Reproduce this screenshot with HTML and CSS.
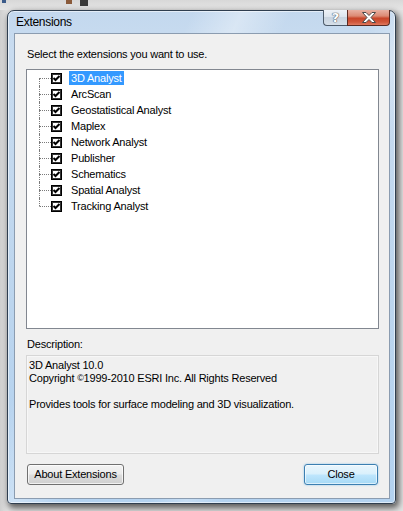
FILE: index.html
```html
<!DOCTYPE html>
<html>
<head>
<meta charset="utf-8">
<link rel="stylesheet" href="styles.css">
</head>
<body>
<div class="desk">
  <div class="strip">
    <span class="bit bit-a"></span>
    <span class="bit bit-b"></span>
    <span class="bit bit-c"></span>
  </div>
  <div class="window">
    <div class="titlebar">
      <div class="title">Extensions</div>
      <div class="caps">
        <div class="cap cap-help">?</div>
        <div class="cap cap-close">
          <svg width="16" height="11" viewBox="0 0 16 11"><path d="M1.5 0.5 H5 L8 3.5 L11 0.5 H14.5 L10 5.5 L14.5 10.5 H11 L8 7.5 L5 10.5 H1.5 L6 5.5 Z" fill="#ffffff" stroke="#4a4a4a" stroke-width="1"/></svg>
        </div>
      </div>
    </div>
    <div class="client">
      <div class="label first">Select the extensions you want to use.</div>
      <div class="listbox">
        <div class="tree">
          <div class="row top"><div class="conn"><div class="up"></div><div class="dn"></div></div><svg class="chk" width="11" height="11" viewBox="0 0 11 11"><rect x="0.5" y="0.5" width="10" height="10" fill="#fff" stroke="#000"/><rect x="1.5" y="1.5" width="8" height="8" fill="none" stroke="#333"/><path d="M2.5 5 L4.5 7 L8.5 3" fill="none" stroke="#000" stroke-width="2"/></svg><span class="name sel">3D Analyst</span></div>
          <div class="row"><div class="conn"><div class="up"></div><div class="dn"></div></div><svg class="chk" width="11" height="11" viewBox="0 0 11 11"><rect x="0.5" y="0.5" width="10" height="10" fill="#fff" stroke="#000"/><rect x="1.5" y="1.5" width="8" height="8" fill="none" stroke="#333"/><path d="M2.5 5 L4.5 7 L8.5 3" fill="none" stroke="#000" stroke-width="2"/></svg><span class="name">ArcScan</span></div>
          <div class="row"><div class="conn"><div class="up"></div><div class="dn"></div></div><svg class="chk" width="11" height="11" viewBox="0 0 11 11"><rect x="0.5" y="0.5" width="10" height="10" fill="#fff" stroke="#000"/><rect x="1.5" y="1.5" width="8" height="8" fill="none" stroke="#333"/><path d="M2.5 5 L4.5 7 L8.5 3" fill="none" stroke="#000" stroke-width="2"/></svg><span class="name">Geostatistical Analyst</span></div>
          <div class="row"><div class="conn"><div class="up"></div><div class="dn"></div></div><svg class="chk" width="11" height="11" viewBox="0 0 11 11"><rect x="0.5" y="0.5" width="10" height="10" fill="#fff" stroke="#000"/><rect x="1.5" y="1.5" width="8" height="8" fill="none" stroke="#333"/><path d="M2.5 5 L4.5 7 L8.5 3" fill="none" stroke="#000" stroke-width="2"/></svg><span class="name">Maplex</span></div>
          <div class="row"><div class="conn"><div class="up"></div><div class="dn"></div></div><svg class="chk" width="11" height="11" viewBox="0 0 11 11"><rect x="0.5" y="0.5" width="10" height="10" fill="#fff" stroke="#000"/><rect x="1.5" y="1.5" width="8" height="8" fill="none" stroke="#333"/><path d="M2.5 5 L4.5 7 L8.5 3" fill="none" stroke="#000" stroke-width="2"/></svg><span class="name">Network Analyst</span></div>
          <div class="row"><div class="conn"><div class="up"></div><div class="dn"></div></div><svg class="chk" width="11" height="11" viewBox="0 0 11 11"><rect x="0.5" y="0.5" width="10" height="10" fill="#fff" stroke="#000"/><rect x="1.5" y="1.5" width="8" height="8" fill="none" stroke="#333"/><path d="M2.5 5 L4.5 7 L8.5 3" fill="none" stroke="#000" stroke-width="2"/></svg><span class="name">Publisher</span></div>
          <div class="row"><div class="conn"><div class="up"></div><div class="dn"></div></div><svg class="chk" width="11" height="11" viewBox="0 0 11 11"><rect x="0.5" y="0.5" width="10" height="10" fill="#fff" stroke="#000"/><rect x="1.5" y="1.5" width="8" height="8" fill="none" stroke="#333"/><path d="M2.5 5 L4.5 7 L8.5 3" fill="none" stroke="#000" stroke-width="2"/></svg><span class="name">Schematics</span></div>
          <div class="row"><div class="conn"><div class="up"></div><div class="dn"></div></div><svg class="chk" width="11" height="11" viewBox="0 0 11 11"><rect x="0.5" y="0.5" width="10" height="10" fill="#fff" stroke="#000"/><rect x="1.5" y="1.5" width="8" height="8" fill="none" stroke="#333"/><path d="M2.5 5 L4.5 7 L8.5 3" fill="none" stroke="#000" stroke-width="2"/></svg><span class="name">Spatial Analyst</span></div>
          <div class="row last"><div class="conn"><div class="up"></div><div class="dn"></div></div><svg class="chk" width="11" height="11" viewBox="0 0 11 11"><rect x="0.5" y="0.5" width="10" height="10" fill="#fff" stroke="#000"/><rect x="1.5" y="1.5" width="8" height="8" fill="none" stroke="#333"/><path d="M2.5 5 L4.5 7 L8.5 3" fill="none" stroke="#000" stroke-width="2"/></svg><span class="name">Tracking Analyst</span></div>
        </div>
      </div>
      <div class="label second">Description:</div>
      <div class="descbox">
        <div class="line">3D Analyst 10.0</div>
        <div class="line">Copyright <span class="copy">©</span>1999-2010 ESRI Inc. All Rights Reserved</div>
        <div class="line">&nbsp;</div>
        <div class="line">Provides tools for surface modeling and 3D visualization.</div>
      </div>
      <div class="buttons">
        <div class="btn btn-about">About Extensions</div>
        <div class="btn btn-close">Close</div>
      </div>
    </div>
  </div>
</div>
</body>
</html>
```

FILE: styles.css
```css
html, body {
  margin: 0;
  padding: 0;
}
body {
  width: 403px;
  height: 511px;
  overflow: hidden;
  font-family: "Liberation Sans", Arial, sans-serif;
  font-size: 11px;
  letter-spacing: -0.2px;
  color: #000;
}
.desk {
  width: 403px;
  height: 511px;
  background: linear-gradient(90deg, #cfcfcf 0px, #e2e2e2 7px, #e2e2e2 100%);
}
.strip {
  height: 10px;
  display: flex;
  align-items: flex-start;
  background: linear-gradient(#d8d8d8, #e6e6e6);
}
.bit {
  display: block;
  background: #555;
}
.bit-a {
  width: 4px;
  height: 3px;
  margin-left: 2px;
  background: #3b5b8a;
}
.bit-b {
  width: 6px;
  height: 4px;
  margin-left: 60px;
  background: #8a5a3a;
}
.bit-c {
  width: 8px;
  height: 6px;
  margin-left: 8px;
  background: #3a3a3a;
}
.window {
  margin-left: 7px;
  width: 389px;
  height: 494px;
  box-sizing: border-box;
  border: 1px solid #2f3e4f;
  border-radius: 7px 7px 4px 4px;
  background:
    linear-gradient(115deg, rgba(255,255,255,0) 30%, rgba(255,255,255,0.35) 38%, rgba(255,255,255,0) 46%, rgba(255,255,255,0) 60%, rgba(255,255,255,0.25) 66%, rgba(255,255,255,0) 72%),
    linear-gradient(#c3d8ee 0%, #c9dcf0 8%, #bcd5ee 60%, #b3d2f0 100%);
  box-shadow: 2px 3px 6px 1px rgba(0,0,0,0.6), inset 0 0 0 1px rgba(255,255,255,0.55);
  display: flex;
  flex-direction: column;
}
.titlebar {
  height: 22px;
  display: flex;
  align-items: flex-start;
}
.title {
  margin-top: 4px;
  padding-left: 8px;
  font-size: 12px;
  letter-spacing: -0.3px;
  line-height: 15px;
  color: #000;
}
.caps {
  margin-left: auto;
  margin-top: -1px;
  margin-right: 5px;
  display: flex;
}
.cap {
  height: 16px;
  box-sizing: border-box;
  display: flex;
  align-items: center;
  justify-content: center;
}
.cap-help {
  width: 24px;
  border: 1px solid #4d5b6b;
  border-top: none;
  border-right: none;
  border-radius: 0 0 0 4px;
  background: linear-gradient(#eef2f7 0%, #dde5ee 45%, #c9d4e0 50%, #d6dfe9 100%);
  font-family: "DejaVu Sans", sans-serif;
  font-size: 13px;
  font-weight: bold;
  letter-spacing: 0;
  color: #ffffff;
  text-shadow: 0 0 1px #505a66, 0 0 1px #505a66, 0 0 1px #505a66;
  line-height: 15px;
}
.cap-close {
  width: 43px;
  border: 1px solid #5a2a22;
  border-top: none;
  border-radius: 0 0 4px 0;
  background: linear-gradient(#e8b1a3 0%, #dc8a74 40%, #c8452a 55%, #d0563a 80%, #e07a60 100%);
}
.cap-close svg {
  display: block;
}
.client {
  flex: 1;
  margin: 0 5px 4px 6px;
  border: 1px solid #8b9cb0;
  background: #f0f0f0;
  padding: 0 10px 0 11px;
  display: flex;
  flex-direction: column;
}
.label {
  line-height: 13px;
  height: 13px;
  padding-left: 1px;
  white-space: nowrap;
}
.label.first {
  margin-top: 14px;
}
.label.second {
  margin-top: 9px;
}
.listbox {
  margin-top: 8px;
  height: 260px;
  box-sizing: border-box;
  border: 1px solid #828790;
  background: #ffffff;
}
.tree {
  padding-left: 12px;
}
.row {
  height: 16px;
  display: flex;
  align-items: center;
}
.conn {
  width: 12px;
  height: 16px;
  box-sizing: border-box;
  display: flex;
  flex-direction: column;
}
.up {
  height: 8px;
  border-left: 1px dotted #7a7a7a;
}
.dn {
  height: 8px;
  border-left: 1px dotted #7a7a7a;
  border-top: 1px dotted #7a7a7a;
  box-sizing: border-box;
}
.row.top .up {
  border-left-color: transparent;
}
.row.last .dn {
  border-left-color: transparent;
}
.chk {
  display: block;
  flex: none;
}
.name {
  margin-left: 7px;
  padding: 0 2px;
  line-height: 14px;
  height: 14px;
  white-space: nowrap;
}
.name.sel {
  background: #3399ff;
  color: #ffffff;
}
.descbox {
  margin-top: 4px;
  height: 99px;
  box-sizing: border-box;
  border: 1px solid #d6d6d6;
  box-shadow: inset 0 0 0 1px #f7f7f7;
  background: #f0f0f0;
  padding: 3px 2px 0 2px;
}
.line {
  line-height: 13px;
  height: 13px;
  white-space: nowrap;
}
.copy {
  font-size: 9px;
  vertical-align: 1px;
}
.buttons {
  margin-top: 10px;
  padding: 0 1px;
  display: flex;
  justify-content: space-between;
}
.btn {
  height: 21px;
  box-sizing: border-box;
  border-radius: 3px;
  display: flex;
  align-items: center;
  justify-content: center;
  line-height: 13px;
  white-space: nowrap;
}
.btn-about {
  width: 97px;
  border: 1px solid #707070;
  background: linear-gradient(#f3f3f3 0%, #ebebeb 48%, #dddddd 52%, #cfcfcf 100%);
  box-shadow: inset 0 0 0 1px rgba(255,255,255,0.7);
}
.btn-close {
  width: 74px;
  border: 1px solid #3c7fb1;
  background: linear-gradient(#eaf6fd 0%, #d9f0fc 48%, #bee6fd 52%, #a7d9f5 100%);
  box-shadow: inset 0 0 0 1px rgba(255,255,255,0.6), 0 0 2px rgba(60,160,230,0.6);
}
```
